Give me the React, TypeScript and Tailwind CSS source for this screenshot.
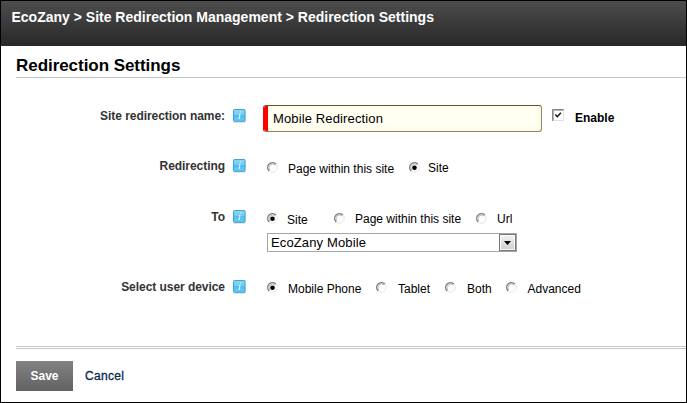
import React, { useState } from "react";

function InfoIcon() {
  return (
    <svg className="mt-px ml-2 shrink-0" width="13" height="14" viewBox="0 0 13 14" aria-label="info">
      <defs>
        <linearGradient id="info-fill" x1="0" y1="0" x2="0" y2="1">
          <stop offset="0" stopColor="#8ad6f4" />
          <stop offset="0.5" stopColor="#6fcaf0" />
          <stop offset="0.5" stopColor="#4fbcee" />
          <stop offset="1" stopColor="#66cdf7" />
        </linearGradient>
      </defs>
      <rect x="0.5" y="12" width="12" height="1.6" fill="#b9b9b9" opacity="0.6" />
      <rect x="0.5" y="0.5" width="11.6" height="11.8" rx="0.8" fill="url(#info-fill)" stroke="#3fa3d4" />
      <path d="M6.9 3h1.2M5.9 5.4h1.2l-0.9 3.7M5.3 9.2h1.8" fill="none" stroke="#eaf8ff" strokeWidth="1" />
    </svg>
  );
}

function Radio({ checked }: { checked: boolean }) {
  return (
    <svg className="shrink-0" width="11" height="11" viewBox="0 0 11 11">
      <circle cx="5.5" cy="5.5" r="4.8" fill="#fdfdfd" stroke="#e6e4e2" strokeWidth="0.9" />
      <path d="M2.1 8.9A4.8 4.8 0 0 1 8.9 2.1" fill="none" stroke="#808080" strokeWidth="1.4" />
      <path d="M2.9 8.1A3.7 3.7 0 0 1 8.1 2.9" fill="none" stroke="#b0aaa3" strokeWidth="0.8" />
      {checked && <circle cx="5.5" cy="5.8" r="2.3" fill="#000" />}
    </svg>
  );
}

type Item = { text: string; box: string; label: string };

function RadioGroup({ items, initial }: { items: Item[]; initial: number }) {
  const [selected, setSelected] = useState(initial);
  return (
    <div className="flex items-start" role="radiogroup">
      {items.map((item, i) => (
        <div
          key={item.text}
          role="radio"
          aria-checked={i === selected}
          onClick={() => setSelected(i)}
          className={`flex items-start text-black ${item.box}`}
        >
          <Radio checked={i === selected} />
          <span className={`whitespace-nowrap ${item.label}`}>{item.text}</span>
        </div>
      ))}
    </div>
  );
}

function Row({ label, height, children }: { label: string; height: string; children: React.ReactNode }) {
  return (
    <div className={`flex items-start ${height}`}>
      <div className="flex w-[230px] shrink-0 items-start justify-end pt-[3px]">
        <span className="font-bold tracking-[-0.05px] whitespace-nowrap text-[#333]">{label}</span>
        <InfoIcon />
      </div>
      {children}
    </div>
  );
}

export default function App() {
  return (
    <div className="flex h-[403px] w-[687px] flex-col overflow-hidden border border-black bg-white font-['Liberation_Sans',Arial,sans-serif] text-[12px] leading-4">
      <header className="h-[45px] shrink-0 bg-linear-to-b from-[#4d4d4d] to-[#282828] pt-[6px] pl-[10.5px] text-[14px] leading-5 font-bold whitespace-nowrap text-white">
        EcoZany &gt; Site Redirection Management &gt; Redirection Settings
      </header>

      <main className="pl-[15px]">
        <h1 className="h-8 border-b border-[#c8c8c8] pt-[10px] text-[17px] leading-5 font-bold tracking-[-0.05px] text-black">
          Redirection Settings
        </h1>

        <form className="pt-[27px]">
          <Row label="Site redirection name:" height="h-[50px]">
            <div className="ml-[17px] flex h-[27px] w-[279px] overflow-hidden rounded-[3px] border border-t-[#5c573c] border-r-[#8d8765] border-b-[#8d8765] border-l-[#f00] bg-[#fffff2] shadow-[inset_0_0_6px_#fbf5d2]">
              <div className="w-1 bg-[#f00]" />
              <span className="pl-[5px] text-[13px] leading-[25px] tracking-[0.13px] text-black">Mobile Redirection</span>
            </div>
            <svg className="mt-1 ml-[10px]" width="12" height="12" viewBox="0 0 12 12">
              <path d="M0 0h12v12H0z" fill="#e4e2dc" />
              <path d="M0 0h12v1H1v11H0z" fill="#8a8a8a" />
              <path d="M1 1h10v1H2v9H1z" fill="#b5b2ad" />
              <path d="M2 2h9v9H2z" fill="#fff" />
              <path d="M3.3 5.6l2 2.1 3.6-3.9" fill="none" stroke="#111" strokeWidth="1.5" />
            </svg>
            <span className="mt-[5px] ml-[11px] font-bold text-black">Enable</span>
          </Row>

          <Row label="Redirecting" height="h-[51px]">
            <div className="pt-[7px] pl-[21px]">
              <RadioGroup
                initial={1}
                items={[
                  { text: "Page within this site", box: "w-[142px]", label: "-mt-px ml-[10px]" },
                  { text: "Site", box: "", label: "-mt-0.5 ml-2" },
                ]}
              />
            </div>
          </Row>

          <Row label="To" height="h-[70px]">
            <div className="pt-[7px] pl-[21px]">
              <RadioGroup
                initial={0}
                items={[
                  { text: "Site", box: "w-[67px]", label: "-mt-px ml-[9px]" },
                  { text: "Page within this site", box: "w-[142px]", label: "-mt-0.5 ml-[10px]" },
                  { text: "Url", box: "", label: "-mt-0.5 ml-[10px]" },
                ]}
              />
              <div className="mt-[5px] flex h-[19px] w-[250px] justify-between border border-[#a5a5aa] bg-white">
                <span className="pl-[3px] text-[13px] leading-[18px] tracking-[0.13px] text-black">EcoZany Mobile</span>
                <div className="flex w-[17px] items-center justify-center border border-[#77777c] bg-linear-to-b from-[#f4f4f4] to-[#cfcfcf] shadow-[inset_0_0_0_1px_#fafafa]">
                  <svg width="7" height="4" viewBox="0 0 7 4">
                    <path d="M0 0h7L3.5 4z" fill="#000" />
                  </svg>
                </div>
              </div>
            </div>
          </Row>

          <Row label="Select user device" height="h-[70px]">
            <div className="pt-[6px] pl-[21px]">
              <RadioGroup
                initial={0}
                items={[
                  { text: "Mobile Phone", box: "w-[109px]", label: "-mt-px ml-[10px]" },
                  { text: "Tablet", box: "w-[69px]", label: "-mt-px ml-[11px]" },
                  { text: "Both", box: "w-[61px]", label: "-mt-px ml-[11px]" },
                  { text: "Advanced", box: "", label: "-mt-px ml-[10.5px]" },
                ]}
              />
            </div>
          </Row>

          <div className="h-[3px] border-y border-[#c8c8c8]" />

          <div className="flex items-center pt-3">
            <button type="button" className="h-[30px] w-[57px] bg-linear-to-b from-[#828282] to-[#626262] font-bold text-white">
              Save
            </button>
            <a className="ml-3 tracking-[0.3px] text-[#06274f] [-webkit-text-stroke:0.3px_#06274f]">Cancel</a>
          </div>
        </form>
      </main>
    </div>
  );
}
